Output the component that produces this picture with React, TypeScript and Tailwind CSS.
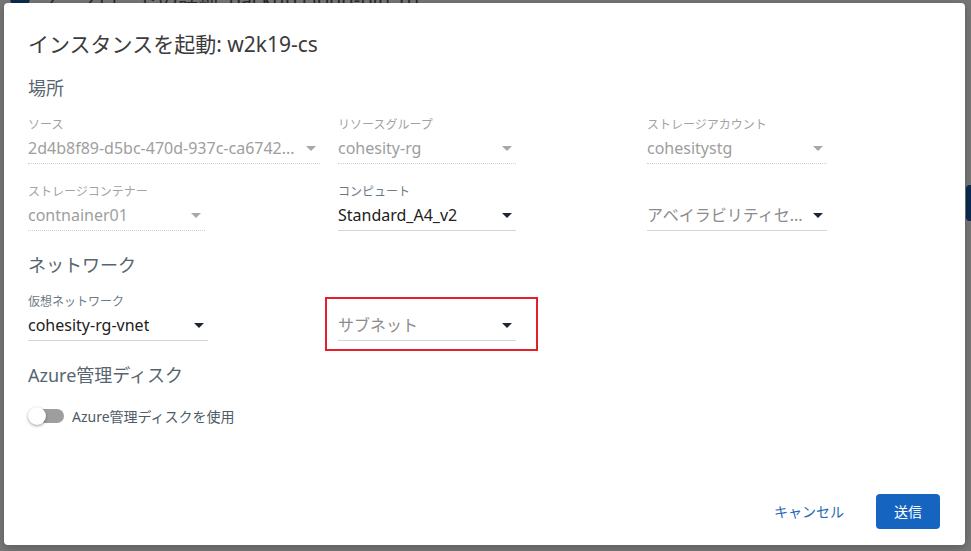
import React from "react";

const FONT = { fontFamily: '"Noto Sans", "Noto Sans CJK JP", sans-serif' };

interface FieldProps {
  label?: string;
  value: string;
  width: string;
  disabled?: boolean;
  placeholder?: boolean;
}

function Arrow({ disabled }: { disabled?: boolean }) {
  return (
    <svg width="10" height="5" viewBox="0 0 10 5" className="shrink-0">
      <path d="M0 0 L10 0 L5 5 Z" fill={disabled ? "#a7a7a7" : "#1c2733"} />
    </svg>
  );
}

function Field({ label, value, width, disabled, placeholder }: FieldProps) {
  return (
    <div className={width}>
      <div
        className={`h-4 text-[12px] leading-4 ${
          disabled ? "text-[#a3a3a3]" : "text-[#6b7a86]"
        }`}
      >
        {label}
      </div>
      <div
        className={`flex h-[31px] items-center justify-between gap-2 pr-[4px] border-b ${
          disabled
            ? "border-dotted border-[#cfcfcf]"
            : "border-solid border-[#d6d6d6]"
        }`}
      >
        <span
          className={`truncate text-[16px] ${
            disabled
              ? "text-[#9e9e9e]"
              : placeholder
              ? "text-[#8c8c8c]"
              : "text-[#212121]"
          }`}
        >
          {value}
        </span>
        <Arrow disabled={disabled} />
      </div>
    </div>
  );
}

function Heading({ children, className }: { children: React.ReactNode; className?: string }) {
  return (
    <div className={`h-6 text-[18px] leading-6 text-[#56656f] ${className ?? ""}`}>
      {children}
    </div>
  );
}

export default function App() {
  return (
    <div className="relative h-[551px] w-[971px] overflow-hidden bg-[#777777]" style={FONT}>
      {/* page behind the overlay */}
      <div className="absolute left-[10px] top-[-12px] h-5 w-5 rounded-full bg-[#0e2c4d]" />
      <div className="absolute left-[38px] top-[-12px] text-[20px] leading-6 text-[#2a2a2a]">
        ワークロードの詳細: backup cloud-pin_rg
      </div>
      <div className="absolute left-[966px] top-[185px] h-[36px] w-[10px] rounded-[4px] bg-[#0b2b50]" />

      {/* dialog */}
      <div className="absolute left-[4px] top-[3px] flex h-[542px] w-[961px] flex-col rounded-[4px] bg-white px-6 pb-4 shadow-[0_2px_8px_rgba(0,0,0,0.25)]">
        <div className="mt-[27px] h-7 text-[21px] leading-7 text-[#3b3b3b]">
          インスタンスを起動: w2k19-cs
        </div>

        <Heading className="mt-[18px]">場所</Heading>

        <div className="mt-[17px] grid grid-cols-[310px_309px_1fr] gap-y-[20px]">
          <Field
            label="ソース"
            value="2d4b8f89-d5bc-470d-937c-ca6742..."
            width="w-[292px]"
            disabled
          />
          <Field label="リソースグループ" value="cohesity-rg" width="w-[178px]" disabled />
          <Field label="ストレージアカウント" value="cohesitystg" width="w-[180px]" disabled />
          <Field label="ストレージコンテナー" value="contnainer01" width="w-[177px]" disabled />
          <Field label="コンピュート" value="Standard_A4_v2" width="w-[178px]" />
          <Field value="アベイラビリティセ..." width="w-[180px]" placeholder />
        </div>

        <Heading className="mt-[22px]">ネットワーク</Heading>

        <div className="mt-[17px] grid grid-cols-[310px_309px_1fr]">
          <Field label="仮想ネットワーク" value="cohesity-rg-vnet" width="w-[180px]" />
          <div className="relative">
            <Field value="サブネット" width="w-[178px]" placeholder />
            <div className="pointer-events-none absolute left-[-13px] top-[3px] h-[54px] w-[213px] border-2 border-[#e3202b]" />
          </div>
        </div>

        <Heading className="mt-[22px]">Azure管理ディスク</Heading>

        <div className="mt-[19px] flex h-5 items-center gap-[6px]">
          <div className="relative h-5 w-[38px]">
            <div className="absolute left-[2px] top-[3px] h-[14px] w-[34px] rounded-full bg-[#9e9e9e]" />
            <div className="absolute left-0 top-[1px] h-[18px] w-[18px] rounded-full bg-white shadow-[0_1px_3px_rgba(0,0,0,0.4)]" />
          </div>
          <span className="text-[14px] text-[#4c5b66]">Azure管理ディスクを使用</span>
        </div>

        <div className="mt-auto flex items-center justify-end gap-4 pr-[1px]">
          <button className="h-[35px] px-4 text-[14px] text-[#2169b3]">キャンセル</button>
          <button className="h-[35px] w-[64px] rounded-[4px] bg-[#1565c0] text-[14px] text-white">
            送信
          </button>
        </div>
      </div>
    </div>
  );
}
